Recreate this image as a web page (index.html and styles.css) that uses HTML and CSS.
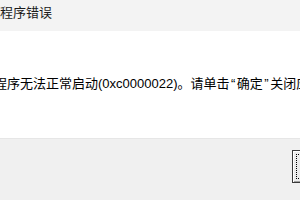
FILE: index.html
```html
<!DOCTYPE html>
<html lang="zh-CN">
<head>
<meta charset="utf-8">
<link rel="stylesheet" href="styles.css">
</head>
<body>
<div class="window">
  <div class="titlebar"><span class="title">程序错误</span></div>
  <div class="content"><p class="message">程序无法正常启动(0xc0000022)。请单击<span class="q">“</span>确定<span class="q">”</span>关闭应用程序。</p></div>
  <div class="footer">
    <div class="btn"><span class="focus">确定</span></div>
  </div>
</div>
</body>
</html>
```
FILE: styles.css
```css
html, body {
  margin: 0;
  padding: 0;
}
body {
  width: 300px;
  height: 200px;
  overflow: hidden;
  background: #f0f0f0;
  font-family: "Liberation Sans", "Noto Sans CJK SC", sans-serif;
  font-size: 13px;
  color: #111;
}
.window {
  display: flex;
  flex-direction: column;
  width: 300px;
  height: 200px;
  overflow: hidden;
}
.titlebar {
  height: 31px;
  background: #f3f3f3;
  box-sizing: border-box;
  padding-top: 4px;
  line-height: 18px;
  white-space: nowrap;
}
.title {
  display: block;
  color: #1a1a1a;
}
.content {
  height: 107px;
  background: #ffffff;
  box-sizing: border-box;
  padding-top: 44px;
  overflow: hidden;
}
.message {
  margin: 0 0 0 -6px;
  white-space: nowrap;
  line-height: 18px;
  color: #000;
}
.q {
  margin: 0 1.5px;
}
.footer {
  flex: 1;
  background: #f0f0f0;
  border-top: 1px solid #e6e6e6;
  box-sizing: border-box;
  padding-top: 11px;
  padding-left: 292px;
  display: flex;
  overflow: hidden;
}
.btn {
  flex: none;
  width: 75px;
  height: 33px;
  box-sizing: border-box;
  border: 1px solid #3a3a3a;
  background: #ececec;
  box-shadow: inset 1px 1px 0 #ffffff, inset -1px -1px 0 #a0a0a0;
  padding: 3px;
}
.focus {
  display: flex;
  align-items: center;
  justify-content: center;
  height: 100%;
  box-sizing: border-box;
  border: 1px dotted #000;
  font-size: 13px;
}
```
